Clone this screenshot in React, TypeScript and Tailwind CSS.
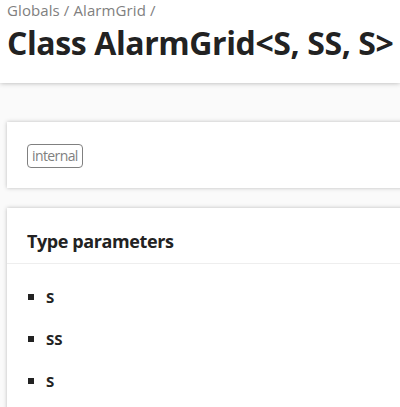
import React from "react";

export default function App() {
  const font = { fontFamily: '"Open Sans", "Noto Sans", sans-serif' };
  return (
    <div className="w-[400px] h-[407px] overflow-hidden bg-[#fafafa] text-[#222]" style={font}>
      <header className="h-[83px] bg-white shadow-[0_0_5px_rgba(0,0,0,0.3)] pl-[7px] relative z-10">
        <div className="h-[20px] text-[15px] leading-[20px] text-[#808080] whitespace-nowrap tracking-[0.1px]">
          Globals / AlarmGrid /
        </div>
        <h1 className="mt-[3px] h-[40px] text-[32px] leading-[40px] font-bold whitespace-nowrap tracking-[-0.4px]">
          Class AlarmGrid&lt;S, SS, S&gt;
        </h1>
      </header>
      <main className="pl-[7px] w-[420px]">
        <section className="mt-[39px] h-[66px] bg-white shadow-[0_0_4px_rgba(0,0,0,0.25)] pl-[20px] pt-[21px]">
          <span className="inline-flex items-center h-[24px] px-[4px] border border-[#808080] rounded-[4px] text-[14px] text-[#808080] tracking-[-0.6px]">
            internal
          </span>
        </section>
        <section className="mt-[20px] bg-white shadow-[0_0_4px_rgba(0,0,0,0.25)] pt-[21px] pb-[40px]">
          <h3 className="px-[20px] pb-[10px] border-b border-[#eee] text-[18px] leading-[24px] font-bold tracking-[-0.4px]">
            Type parameters
          </h3>
          <ul className="mt-[23px] pl-[21px] flex flex-col gap-[22px]">
            {["S", "SS", "S"].map((t, i) => (
              <li key={i} className="flex items-center h-[20px] text-[15px] leading-[20px] font-bold">
                <span className="w-[6px] h-[6px] bg-[#222] mr-[12px]" />
                {t}
              </li>
            ))}
          </ul>
        </section>
      </main>
    </div>
  );
}
